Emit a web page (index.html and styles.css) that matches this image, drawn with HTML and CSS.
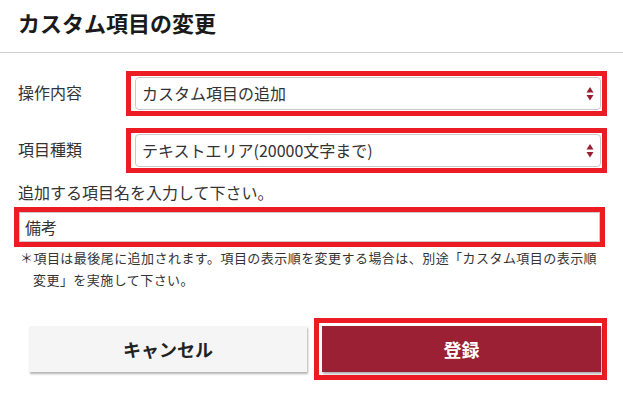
FILE: index.html
```html
<!DOCTYPE html>
<html lang="ja">
<head>
<meta charset="utf-8">
<title>カスタム項目の変更</title>
<link rel="stylesheet" href="styles.css">
</head>
<body>
<header class="head">
  <h1 class="title">カスタム項目の変更</h1>
</header>
<form class="form">
  <div class="row">
    <label class="label">操作内容</label>
    <div class="mark">
      <div class="select-wrap">
        <select class="select"><option>カスタム項目の追加</option></select>
        <svg class="arrows" width="8" height="14" viewBox="0 0 8 14"><path d="M4 0 L7.5 5.5 L0.5 5.5 Z M0.5 8 L7.5 8 L4 13.5 Z" fill="#9b1d30"/></svg>
      </div>
    </div>
  </div>
  <div class="row row2">
    <label class="label">項目種類</label>
    <div class="mark">
      <div class="select-wrap">
        <select class="select"><option>テキストエリア(20000文字まで)</option></select>
        <svg class="arrows" width="8" height="14" viewBox="0 0 8 14"><path d="M4 0 L7.5 5.5 L0.5 5.5 Z M0.5 8 L7.5 8 L4 13.5 Z" fill="#9b1d30"/></svg>
      </div>
    </div>
  </div>
  <p class="prompt">追加する項目名を入力して下さい。</p>
  <div class="mark mark-input">
    <input class="input" type="text" value="備考">
  </div>
  <p class="note">＊項目は最後尾に追加されます。項目の表示順を変更する場合は、別途「カスタム項目の表示順変更」を実施して下さい。</p>
  <div class="buttons">
    <button type="button" class="btn btn-cancel">キャンセル</button>
    <div class="mark mark-btn">
      <button type="button" class="btn btn-submit">登録</button>
    </div>
  </div>
</form>
</body>
</html>
```
FILE: styles.css
```css
* { box-sizing: border-box; }
html, body {
  margin: 0;
  padding: 0;
  background: #fff;
}
body {
  font-family: "Noto Sans CJK JP", "Noto Sans", sans-serif;
  color: #333;
  width: 623px;
  height: 414px;
  overflow: hidden;
}
.head {
  height: 53px;
  border-bottom: 1px solid #cfcfcf;
  padding: 0 18px;
}
.title {
  margin: 0;
  font-size: 22px;
  font-weight: 700;
  line-height: 44px;
  color: #1a1a1a;
}
.form {
  padding: 18px 16px 0 18px;
}
.row {
  display: flex;
  align-items: flex-start;
}
.row2 {
  margin-top: 12px;
}
.label {
  width: 108px;
  flex: none;
  font-size: 16px;
  line-height: 24px;
  padding-top: 9px;
  color: #333;
}
.mark {
  border: 5px solid #ec1c24;
}
.row .mark {
  flex: 1;
  padding: 1px 1px 1px 4px;
}
.select-wrap {
  position: relative;
}
.select {
  display: block;
  width: 100%;
  height: 33px;
  margin: 0;
  border: 1px solid #c9c9c9;
  border-radius: 4px;
  background: #fff;
  -webkit-appearance: none;
  appearance: none;
  font-family: inherit;
  font-size: 16px;
  color: #333;
  padding: 0 24px 0 6px;
  line-height: 31px;
}
.arrows {
  position: absolute;
  right: 7px;
  top: 10px;
  pointer-events: none;
}
.prompt {
  margin: 7px 0 0;
  font-size: 16px;
  line-height: 24px;
  color: #333;
}
.mark-input {
  margin: 3px 2px 0 -4px;
}
.input {
  display: block;
  width: 100%;
  height: 30px;
  margin: 0;
  border: 1px solid #cccccc;
  border-radius: 0;
  font-family: inherit;
  font-size: 16px;
  color: #333;
  padding: 0 5px;
  background: #fff;
}
.note {
  margin: 0;
  font-size: 13px;
  line-height: 22px;
  letter-spacing: 0.45px;
  padding-left: 15px;
  text-indent: -13px;
  color: #333;
}
.buttons {
  display: flex;
  align-items: flex-start;
  gap: 7px;
  margin-top: 27px;
  padding-left: 11px;
}
.btn {
  height: 46px;
  border: none;
  margin: 0;
  font-family: inherit;
  font-size: 18px;
  font-weight: 700;
  cursor: pointer;
  box-shadow: 1px 2px 2px rgba(0, 0, 0, 0.3);
}
.btn-cancel {
  width: 278px;
  margin-top: 8px;
  background: #f5f5f5;
  color: #222;
}
.mark-btn {
  padding: 3px 1px 3px 3px;
}
.btn-submit {
  display: block;
  width: 279px;
  background: #9b2033;
  color: #fff;
}
```
